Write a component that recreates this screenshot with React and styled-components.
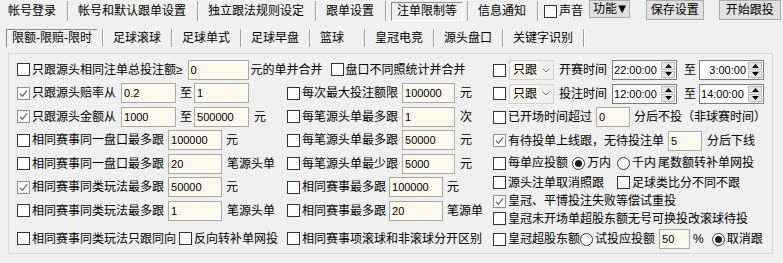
import React from 'react'
import styled, { createGlobalStyle } from 'styled-components'

const GlobalStyle = createGlobalStyle`
  html, body {
    margin: 0;
    padding: 0;
    background: #f0f0f0;
  }
  body {
    font-family: "Liberation Sans", "Noto Sans CJK SC", sans-serif;
    font-size: 12px;
    line-height: 16px;
    color: #000;
  }
  * { box-sizing: border-box; }
`

// ---- little controls ----

const Box = styled.span`
  width: 13px;
  height: 13px;
  flex: none;
  margin: 0 2px 0 ${(p) => p.$ml || 0}px;
  background: #fff;
  border: 1px solid ${(p) => (p.$on ? '#8f8f8f' : '#333')};
  display: inline-flex;
  align-items: center;
  justify-content: center;
`

const Check = ({ on, ml }) => (
  <Box $on={on} $ml={ml}>
    {on && (
      <svg width="11" height="11" viewBox="0 0 11 11">
        <path d="M1.8 5.6 L4.4 8.2 L9.2 2.4" fill="none" stroke="#6e6e6e" strokeWidth="1.3" />
      </svg>
    )}
  </Box>
)

const Ring = styled.span`
  width: 13px;
  height: 13px;
  flex: none;
  margin: 0 2px 0 ${(p) => p.$ml || 0}px;
  border-radius: 50%;
  border: 1px solid #333;
  background: #fff;
  display: inline-flex;
  align-items: center;
  justify-content: center;
  &::after {
    content: '';
    width: 7px;
    height: 7px;
    border-radius: 50%;
    background: ${(p) => (p.$on ? '#1e1e1e' : 'transparent')};
  }
`

const Txt = styled.span`
  white-space: nowrap;
  margin-left: ${(p) => p.$ml || 0}px;
`

const Field = styled.div`
  width: ${(p) => p.$w}px;
  height: 20px;
  flex: none;
  margin-left: ${(p) => p.$ml || 0}px;
  border: 1px solid #a9a9a9;
  background: #fdf9ec;
  font-size: 11px;
  padding: 0 2px;
  display: flex;
  align-items: center;
`

const TimeWrap = styled.div`
  width: 65px;
  height: 20px;
  flex: none;
  margin-left: ${(p) => p.$ml || 0}px;
  border: 1px solid #7a7a7a;
  background: #fff;
  display: flex;
  font-size: 11px;
`

const TimeText = styled.div`
  flex: 1;
  display: flex;
  align-items: center;
  justify-content: ${(p) => (p.$right ? 'flex-end' : 'flex-start')};
  padding: 0 2px 0 1px;
`

const Spin = styled.div`
  width: 15px;
  display: flex;
  flex-direction: column;
  padding: 1px 1px 1px 0;
  gap: 1px;
`

const SpinBtn = styled.div`
  flex: 1;
  background: #e6e6e6;
  border: 1px solid #bcbcbc;
  display: flex;
  align-items: center;
  justify-content: center;
`

const TimeBox = ({ value, right, ml }) => (
  <TimeWrap $ml={ml}>
    <TimeText $right={right}>{value}</TimeText>
    <Spin>
      <SpinBtn>
        <svg width="7" height="4" viewBox="0 0 7 4"><path d="M0 4 L3.5 0 L7 4Z" fill="#000" /></svg>
      </SpinBtn>
      <SpinBtn>
        <svg width="7" height="4" viewBox="0 0 7 4"><path d="M0 0 L3.5 4 L7 0Z" fill="#000" /></svg>
      </SpinBtn>
    </Spin>
  </TimeWrap>
)

const SelectWrap = styled.div`
  width: 45px;
  height: 20px;
  flex: none;
  margin-left: ${(p) => p.$ml || 0}px;
  border: 1px solid #cfcfcf;
  display: flex;
`

const SelectText = styled.div`
  flex: 1;
  background: #fdf9ec;
  padding-left: 3px;
  display: flex;
  align-items: center;
`

const SelectArrow = styled.div`
  width: 15px;
  background: #f0f0f0;
  display: flex;
  align-items: center;
  justify-content: center;
`

const Pick = ({ value, ml }) => (
  <SelectWrap $ml={ml}>
    <SelectText>{value}</SelectText>
    <SelectArrow>
      <svg width="8" height="5" viewBox="0 0 8 5">
        <path d="M0.5 0.5 L4 4 L7.5 0.5" fill="none" stroke="#777" strokeWidth="1" />
      </svg>
    </SelectArrow>
  </SelectWrap>
)

// ---- tab bars ----

const TopBar = styled.div`
  display: flex;
  align-items: center;
  height: 22px;
`

const Tab = styled.div`
  height: 20px;
  display: flex;
  align-items: center;
  padding: 0 ${(p) => p.$pr || 11}px 0 ${(p) => p.$pl || 9}px;
  white-space: nowrap;
`

const Sep = styled.div`
  width: 2px;
  height: ${(p) => p.$h || 20}px;
  flex: none;
  border-left: 1px solid #a0a0a0;
  border-right: 1px solid #fff;
`

const ActiveTab = styled.div`
  height: ${(p) => p.$h}px;
  display: flex;
  align-items: center;
  margin: 0 ${(p) => p.$mr}px 0 ${(p) => p.$ml}px;
  padding: 0 ${(p) => p.$px}px;
  border: 1px solid;
  border-color: #8a8a8a #fff #fff #8a8a8a;
  white-space: nowrap;
`

const Btn = styled.div`
  align-self: flex-start;
  height: ${(p) => p.$h}px;
  margin-left: ${(p) => p.$ml}px;
  padding: 0 ${(p) => p.$px}px;
  background: #e1e1e1;
  border: 1px solid #adadad;
  display: flex;
  align-items: center;
  white-space: nowrap;
`

const Arrow = styled.span`
  font-family: "DejaVu Sans", sans-serif;
  font-size: 10px;
  margin-left: 1px;
`

const SubBar = styled.div`
  display: flex;
  align-items: center;
  height: 22px;
  margin-top: 5px;
`

// ---- main panel ----

const Panel = styled.div`
  display: flex;
  margin: 4px 10px 0 8px;
  padding: 4px 0 0 8px;
  height: 201px;
  border: 1px solid #d6d6d6;
`

const LeftGrid = styled.div`
  display: grid;
  grid-template-columns: 270px 206px;
  grid-template-rows: repeat(7, 23.5px) 29px;
`

const Line = styled.div`
  display: flex;
  align-items: center;
  grid-column: ${(p) => (p.$span ? '1 / 3' : 'auto')};
  padding-top: ${(p) => p.$pt || 0}px;
`

const RightCol = styled.div`
  display: flex;
  flex-direction: column;
`

const RLine = styled.div`
  display: flex;
  align-items: center;
  height: ${(p) => p.$h}px;
`

export default function App() {
  return (
    <>
      <GlobalStyle />
      <TopBar>
        <Tab $pl={8}>帐号登录</Tab>
        <Sep />
        <Tab>帐号和默认跟单设置</Tab>
        <Sep />
        <Tab>独立跟法规则设定</Tab>
        <Sep />
        <Tab>跟单设置</Tab>
        <Sep />
        <ActiveTab $h={19} $ml={4} $mr={4} $px={5}>注单限制等</ActiveTab>
        <Sep />
        <Tab>信息通知</Tab>
        <Sep />
        <Check ml={5} />
        <Txt>声音</Txt>
        <Btn $h={18} $ml={6} $px={3}>功能<Arrow>▼</Arrow></Btn>
        <Btn $h={20} $ml={16} $px={4}>保存设置</Btn>
        <Btn $h={20} $ml={15} $px={6}>开始跟投</Btn>
      </TopBar>

      <SubBar>
        <ActiveTab $h={19} $ml={6} $mr={4} $px={5}>限额-限赔-限时</ActiveTab>
        <Sep $h={18} />
        <Tab $pr={10}>足球滚球</Tab>
        <Sep $h={18} />
        <Tab $pr={10}>足球单式</Tab>
        <Sep $h={18} />
        <Tab $pr={10}>足球早盘</Tab>
        <Sep $h={18} />
        <Tab $pr={20}>篮球</Tab>
        <Sep $h={18} />
        <Tab $pr={10}>皇冠电竞</Tab>
        <Sep $h={18} />
        <Tab $pr={10}>源头盘口</Tab>
        <Sep $h={18} />
        <Tab $pr={10}>关键字识别</Tab>
        <Sep $h={18} />
      </SubBar>

      <Panel>
        <LeftGrid>
          <Line $span>
            <Check />
            <Txt>只跟源头相同注单总投注额≥</Txt>
            <Field $w={61} $ml={5}>0</Field>
            <Txt $ml={2}>元的单并合并</Txt>
            <Check ml={8} />
            <Txt>盘口不同照统计并合并</Txt>
          </Line>

          <Line>
            <Check on />
            <Txt>只跟源头赔率从</Txt>
            <Field $w={55} $ml={5}>0.2</Field>
            <Txt $ml={4}>至</Txt>
            <Field $w={55} $ml={2}>1</Field>
          </Line>
          <Line>
            <Check />
            <Txt>每次最大投注额限</Txt>
            <Field $w={53} $ml={4}>100000</Field>
            <Txt $ml={5}>元</Txt>
          </Line>

          <Line>
            <Check on />
            <Txt>只跟源头金额从</Txt>
            <Field $w={55} $ml={5}>1000</Field>
            <Txt $ml={4}>至</Txt>
            <Field $w={55} $ml={2}>500000</Field>
            <Txt $ml={5}>元</Txt>
          </Line>
          <Line>
            <Check />
            <Txt>每笔源头单最多跟</Txt>
            <Field $w={53} $ml={4}>1</Field>
            <Txt $ml={5}>次</Txt>
          </Line>

          <Line>
            <Check />
            <Txt>相同赛事同一盘口最多跟</Txt>
            <Field $w={54} $ml={4}>100000</Field>
            <Txt $ml={4}>元</Txt>
          </Line>
          <Line>
            <Check />
            <Txt>每笔源头单最多跟</Txt>
            <Field $w={53} $ml={4}>50000</Field>
            <Txt $ml={5}>元</Txt>
          </Line>

          <Line>
            <Check />
            <Txt>相同赛事同一盘口最多跟</Txt>
            <Field $w={54} $ml={4}>20</Field>
            <Txt $ml={5}>笔源头单</Txt>
          </Line>
          <Line>
            <Check />
            <Txt>每笔源头单最少跟</Txt>
            <Field $w={53} $ml={4}>5000</Field>
            <Txt $ml={5}>元</Txt>
          </Line>

          <Line>
            <Check on />
            <Txt>相同赛事同类玩法最多跟</Txt>
            <Field $w={54} $ml={4}>50000</Field>
            <Txt $ml={4}>元</Txt>
          </Line>
          <Line>
            <Check />
            <Txt>相同赛事最多跟</Txt>
            <Field $w={54} $ml={3}>100000</Field>
            <Txt $ml={4}>元</Txt>
          </Line>

          <Line>
            <Check />
            <Txt>相同赛事同类玩法最多跟</Txt>
            <Field $w={54} $ml={4}>1</Field>
            <Txt $ml={5}>笔源头单</Txt>
          </Line>
          <Line>
            <Check />
            <Txt>相同赛事最多跟</Txt>
            <Field $w={54} $ml={3}>20</Field>
            <Txt $ml={4}>笔源单</Txt>
          </Line>

          <Line $pt={3}>
            <Check />
            <Txt>相同赛事同类玩法只跟同向</Txt>
            <Check ml={3} />
            <Txt>反向转补单网投</Txt>
          </Line>
          <Line $pt={3}>
            <Check />
            <Txt>相同赛事项滚球和非滚球分开区别</Txt>
          </Line>
        </LeftGrid>

        <RightCol>
          <RLine $h={24}>
            <Check />
            <Pick value="只跟" ml={1} />
            <Txt $ml={5}>开赛时间</Txt>
            <TimeBox value="22:00:00" ml={5} />
            <Txt $ml={7}>至</Txt>
            <TimeBox value="3:00:00" right ml={3} />
          </RLine>
          <RLine $h={23.5}>
            <Check />
            <Pick value="只跟" ml={1} />
            <Txt $ml={5}>投注时间</Txt>
            <TimeBox value="12:00:00" ml={5} />
            <Txt $ml={7}>至</Txt>
            <TimeBox value="14:00:00" ml={3} />
          </RLine>
          <RLine $h={23.5}>
            <Check />
            <Txt>已开场时间超过</Txt>
            <Field $w={34} $ml={4}>0</Field>
            <Txt $ml={4}>分后不投（非球赛时间）</Txt>
          </RLine>
          <RLine $h={23.5}>
            <Check on />
            <Txt>有待投单上线跟，无待投注单</Txt>
            <Field $w={34} $ml={4}>5</Field>
            <Txt $ml={5}>分后下线</Txt>
          </RLine>
          <RLine $h={21}>
            <Check />
            <Txt>每单应投额</Txt>
            <Ring $on $ml={4} />
            <Txt>万内</Txt>
            <Ring $ml={6} />
            <Txt>千内</Txt>
            <Txt $ml={2}>尾数额转补单网投</Txt>
          </RLine>
          <RLine $h={18}>
            <Check />
            <Txt>源头注单取消照跟</Txt>
            <Check ml={13} />
            <Txt>足球类比分不同不跟</Txt>
          </RLine>
          <RLine $h={19}>
            <Check on />
            <Txt>皇冠、平博投注失败等偿试重投</Txt>
          </RLine>
          <RLine $h={16}>
            <Check />
            <Txt>皇冠未开场单超股东额无号可换投改滚球待投</Txt>
          </RLine>
          <RLine $h={25}>
            <Check />
            <Txt>皇冠超股东额</Txt>
            <Ring />
            <Txt>试投应投额</Txt>
            <Field $w={31} $ml={4}>50</Field>
            <Txt $ml={3}>%</Txt>
            <Ring $on $ml={8} />
            <Txt>取消跟</Txt>
          </RLine>
        </RightCol>
      </Panel>
    </>
  )
}
